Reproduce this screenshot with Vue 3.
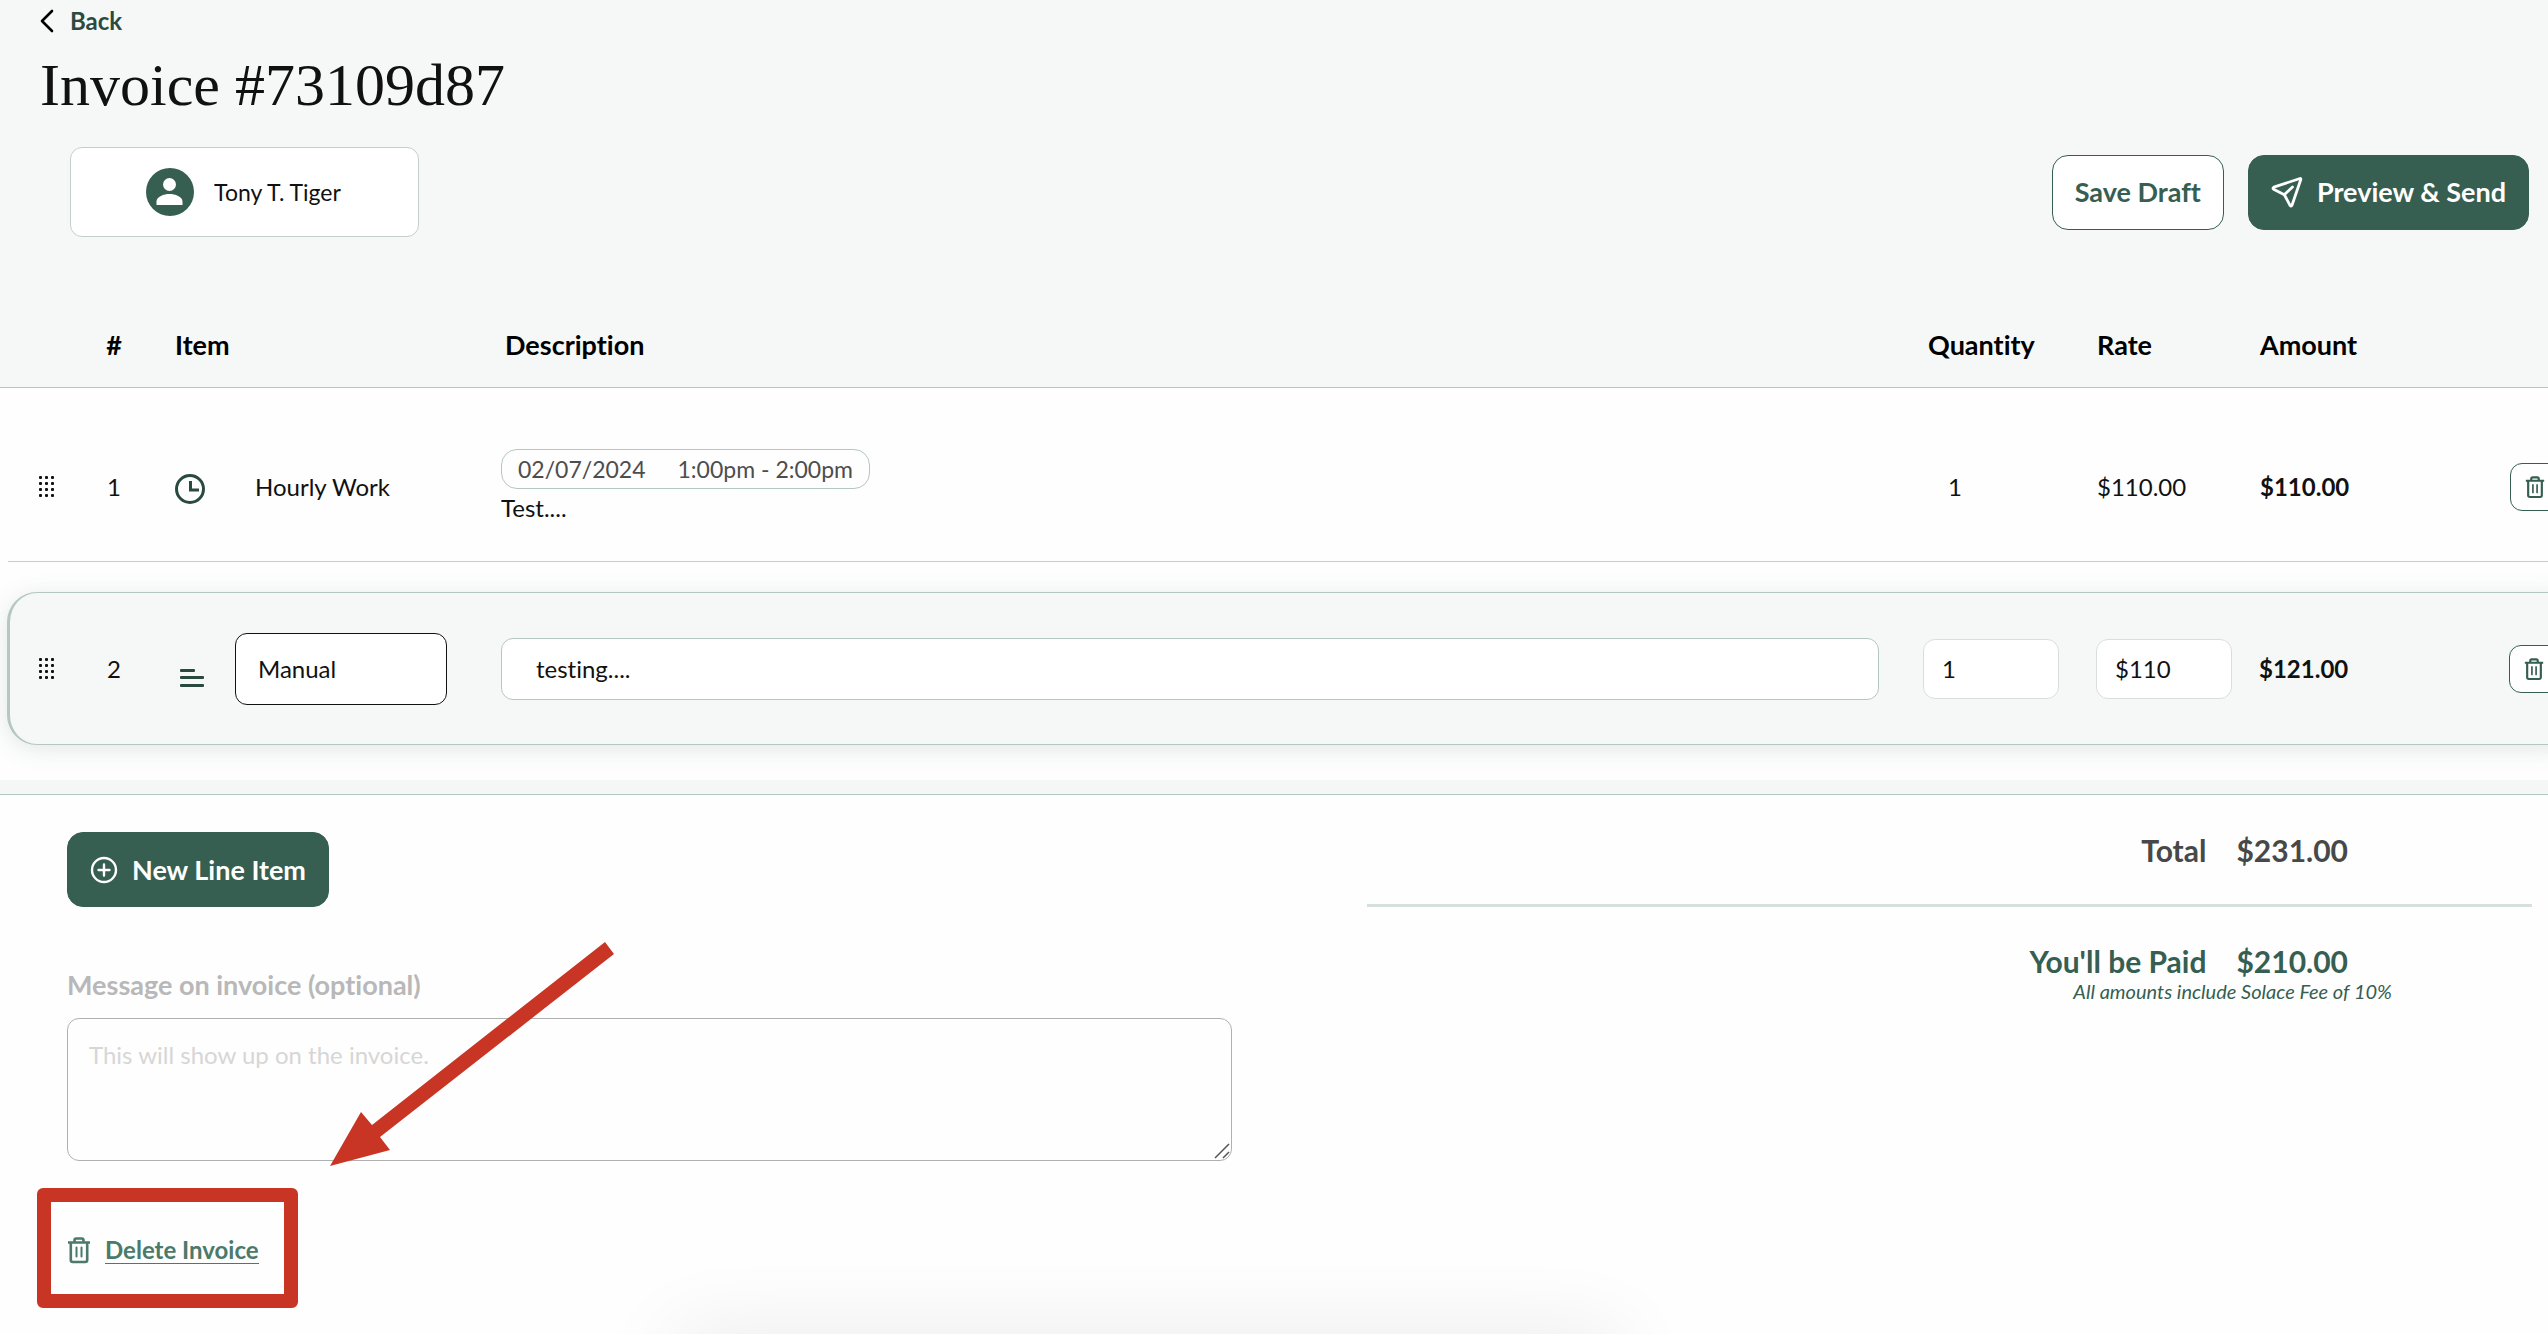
<script setup>
import { ref, computed } from 'vue'

const client = 'Tony T. Tiger'
const message = ref('')
const manual = ref({ title: 'Manual', description: 'testing....', quantity: '1', rate: '$110' })
const gripDots = computed(() => {
  const dots = []
  for (let row = 0; row < 4; row++) {
    for (let col = 0; col < 3; col++) dots.push({ x: col * 6, y: row * 6 })
  }
  return dots
})
</script>

<template>
  <div class="page">
    <svg class="symbols" aria-hidden="true">
      <symbol id="trash" viewBox="0 0 24 28">
        <g fill="none" stroke="currentColor" stroke-width="2.6" stroke-linejoin="round">
          <path d="M1 6.5h22M7.500 6V4.200Q7.500 2.500 9.200 2.500h5.600q1.700 0 1.700 1.700V6" />
          <path d="M3.800 6.500v17.500q0 2 2 2h12.400q2 0 2-2V6.500" />
          <path d="M9.500 11.500v9M14.500 11.500v9" stroke-linecap="round" stroke-width="2" />
        </g>
      </symbol>
      <symbol id="grip" viewBox="0 0 16 22">
        <rect v-for="(d, i) in gripDots" :key="i" :x="d.x" :y="d.y" width="3" height="3" rx="1" fill="currentColor" />
      </symbol>
    </svg>

    <header class="top">
      <a class="back" href="#">
        <svg width="14" height="24" viewBox="0 0 14 24" fill="none" stroke="#000" stroke-width="2.600" stroke-linecap="round" stroke-linejoin="round">
          <path d="M12 2 2 12l10 10" />
        </svg>
        Back
      </a>
      <h1>Invoice #73109d87</h1>
      <div class="bar">
        <div class="client">
          <svg width="48" height="48" viewBox="0 0 48 48">
            <circle cx="24" cy="24" r="24" fill="#365e51" />
            <circle cx="23.500" cy="16.500" r="6.500" fill="#fff" />
            <path d="M10.500 37v-3.500c0-5 7.500-7.500 13-7.500s13 2.500 13 7.500V37z" fill="#fff" />
          </svg>
          <span>{{ client }}</span>
        </div>
        <div class="actions">
          <button type="button" class="btn outline">Save Draft</button>
          <button type="button" class="btn solid send">
            <svg width="32" height="32" viewBox="0 0 32 32" fill="none" stroke="#fff" stroke-width="2.800" stroke-linecap="round" stroke-linejoin="round">
              <path d="M29 2.500 2.800 11.200q-1.600.8-.2 2l10.800 5.600 5.600 10.600q1.200 1.500 2-.2L29.800 3.500q.2-1.200-.8-1z" />
              <path d="m13.500 18.500 8-7.500" />
            </svg>
            Preview &amp; Send
          </button>
        </div>
      </div>
    </header>

    <div class="items">
      <table>
        <thead>
          <tr>
            <th aria-label="Reorder"></th>
            <th class="num">#</th>
            <th>Item</th>
            <th class="desc-head">Description</th>
            <th class="desc-head">Quantity</th>
            <th>Rate</th>
            <th>Amount</th>
            <th aria-label="Remove"></th>
          </tr>
        </thead>
        <tbody>
          <tr class="plain">
            <td class="grip"><svg width="16" height="22"><use href="#grip" /></svg></td>
            <td class="num">1</td>
            <td class="item">
              <svg class="kind" width="32" height="36" viewBox="0 0 32 36" fill="none" stroke="#2a4a40" stroke-width="3">
                <circle cx="15" cy="20" r="13.500" />
                <path d="M15.500 12v9H24" />
              </svg>
              <span class="item-name">Hourly Work</span>
            </td>
            <td class="work">
              <div class="pill"><span>02/07/2024</span><span>1:00pm - 2:00pm</span></div>
              <div class="note">Test....</div>
            </td>
            <td class="qty">1</td>
            <td>$110.00</td>
            <td class="amount">$110.00</td>
            <td>
              <button type="button" class="remove" aria-label="Remove item 1"><svg width="20" height="24"><use href="#trash" /></svg></button>
            </td>
          </tr>
          <tr class="card">
            <td class="grip"><svg width="16" height="22"><use href="#grip" /></svg></td>
            <td class="num">2</td>
            <td class="item">
              <svg class="kind" width="32" height="36" viewBox="0 0 32 36" fill="#2a4a40">
                <rect x="5" y="18" width="15" height="3" rx="1" />
                <rect x="5" y="25" width="24" height="3" rx="1" />
                <rect x="5" y="33" width="24" height="3" rx="1" />
              </svg>
              <input v-model="manual.title" class="field title-field" aria-label="Item" />
            </td>
            <td><input v-model="manual.description" class="field desc-field" aria-label="Description" /></td>
            <td><input v-model="manual.quantity" class="field small-field" aria-label="Quantity" /></td>
            <td><input v-model="manual.rate" class="field small-field" aria-label="Rate" /></td>
            <td class="amount">$121.00</td>
            <td>
              <button type="button" class="remove" aria-label="Remove item 2"><svg width="20" height="24"><use href="#trash" /></svg></button>
            </td>
          </tr>
        </tbody>
      </table>
    </div>

    <main class="bottom">
      <section class="left">
        <button type="button" class="btn solid add">
          <svg width="28" height="28" viewBox="0 0 28 28" fill="none" stroke="#fff" stroke-width="2.400" stroke-linecap="round">
            <circle cx="14" cy="14" r="12" />
            <path d="M14 8.500v11M8.500 14h11" />
          </svg>
          New Line Item
        </button>
        <label for="message">Message on invoice (optional)</label>
        <div class="message">
          <textarea id="message" v-model="message" placeholder="This will show up on the invoice."></textarea>
          <svg class="resize" width="16" height="16" viewBox="0 0 16 16" stroke="#555" stroke-width="1.500">
            <path d="M1 15 15 1M9 15l6-6" />
          </svg>
        </div>
        <div class="marked">
          <a class="delete" href="#">
            <svg width="24" height="28"><use href="#trash" /></svg>
            <span>Delete Invoice</span>
          </a>
        </div>
        <svg class="arrow" width="288" height="226" viewBox="0 0 288 226" fill="#c93524">
          <path d="M0 225 31 171l11 13L275 1l9 12L50 196l10 13z" />
        </svg>
      </section>
      <section class="totals">
        <dl class="line">
          <dt>Total</dt>
          <dd>$231.00</dd>
        </dl>
        <hr />
        <dl class="line paid">
          <dt>You'll be Paid</dt>
          <dd>$210.00</dd>
        </dl>
        <p class="fee">All amounts include Solace Fee of 10%</p>
      </section>
      <div class="glow"></div>
    </main>
  </div>
</template>

<style>
body {
  margin: 0;
  background: #fff;
}
</style>

<style scoped>
* {
  box-sizing: border-box;
}
.page {
  position: relative;
  min-height: 100vh;
  overflow: hidden;
  background: #fefefe;
  font-family: Lato, 'Open Sans', sans-serif;
  font-size: 24px;
  line-height: 32px;
  font-variant-ligatures: none;
  color: #111;
  display: flex;
  flex-direction: column;
}
.symbols {
  position: absolute;
  width: 0;
  height: 0;
}
svg {
  display: block;
  flex: none;
}
button,
input,
textarea {
  font: inherit;
  font-variant-ligatures: none;
  color: inherit;
  margin: 0;
}
.top {
  background: #f5f8f7;
  padding: 5px 19px 0 40px;
}
.back {
  display: inline-flex;
  align-items: center;
  gap: 16px;
  font-weight: 700;
  color: #2c4a40;
  text-decoration: none;
}
h1 {
  margin: 7px 0 0;
  font-family: 'Liberation Serif', serif;
  font-size: 60px;
  line-height: 76px;
  font-weight: 400;
}
.bar {
  display: flex;
  justify-content: space-between;
  align-items: center;
  margin-top: 24px;
}
.client {
  display: flex;
  align-items: center;
  justify-content: center;
  gap: 20px;
  width: 349px;
  height: 90px;
  margin-left: 30px;
  padding-right: 2px;
  background: #fff;
  border: 1px solid #c3cfcc;
  border-radius: 12px;
  font-size: 23px;
}
.actions {
  display: flex;
  gap: 24px;
}
.btn {
  display: flex;
  align-items: center;
  justify-content: center;
  height: 75px;
  padding: 0 22px;
  border: 1px solid #365e51;
  border-radius: 16px;
  font-size: 27px;
  font-weight: 700;
}
.outline {
  background: #fff;
  color: #365e51;
}
.solid {
  background: #365e51;
  color: #fff;
}
.send {
  gap: 14px;
}
.items {
  overflow: hidden;
  border-bottom: 1px solid #b5c5c1;
  padding-bottom: 14px;
  background: #f5f7f6;
}
table {
  display: block;
  width: calc(100% + 32px);
}
thead,
tbody {
  display: block;
}
tbody {
  background: #fefefe;
  padding: 0 0 35px 8px;
}
tr {
  display: grid;
  grid-template-columns: 90px 77px 326px minmax(0, 1fr) 173px 163px 250px 70px;
  align-items: center;
}
th,
td {
  padding: 0;
  text-align: left;
}
thead tr {
  height: 151px;
  padding: 66px 0 0 8px;
  background: #f5f8f7;
  border-bottom: 1px solid #b5c5c1;
  font-size: 27px;
  color: #000;
}
th.desc-head {
  padding-left: 4px;
}
th.num,
td.num {
  width: 32px;
  text-align: center;
}
.plain {
  height: 174px;
  padding-top: 24px;
  border-bottom: 1px solid #c8cccb;
}
.card {
  grid-template-columns: 88px 77px 326px minmax(0, 1fr) 173px 163px 250px 70px;
  height: 153px;
  margin: 30px 0 0 -1px;
  background: #f5f8f7;
  border: 1px solid #b5c7c2;
  border-left-width: 3px;
  border-radius: 30px;
  box-shadow: 0 4px 24px rgba(54, 94, 81, 0.14);
}
.grip {
  padding-left: 31px;
}
.card .grip {
  padding-left: 29px;
}
.item {
  display: flex;
  align-items: center;
}
.item-name {
  margin-left: 48px;
}
.title-field {
  margin-left: 28px;
}
td.work {
  padding-top: 2px;
}
.pill {
  display: flex;
  width: max-content;
  gap: 32px;
  height: 40px;
  align-items: center;
  padding: 0 16px;
  border: 1px solid #b5c7c2;
  border-radius: 16px;
  font-size: 23px;
  color: #4d4d4d;
}
.note {
  line-height: 38px;
}
.qty {
  padding-left: 24px;
}
.amount {
  font-weight: 700;
}
.remove {
  display: flex;
  align-items: center;
  width: 58px;
  height: 48px;
  padding: 0 14px;
  border: 1px solid #365e51;
  border-radius: 12px;
  background: #fff;
  color: #365e51;
}
.field {
  display: block;
  background: #fff;
  border: 1px solid #d9dedd;
  border-radius: 12px;
}
.title-field {
  width: 212px;
  height: 72px;
  padding: 0 22px;
  border-color: #111;
}
.desc-field {
  width: calc(100% - 44px);
  height: 62px;
  padding: 0 34px;
  border-color: #b5c7c2;
}
.small-field {
  width: 136px;
  height: 60px;
  padding: 0 18px;
}
.bottom {
  position: relative;
  flex: 1;
  display: grid;
  grid-template-columns: minmax(0, 1165fr) minmax(0, 1165fr);
  gap: 135px;
  padding: 37px 16px 0 67px;
  align-items: start;
}
.left {
  position: relative;
}
.add {
  gap: 14px;
}
label {
  display: block;
  margin-top: 60px;
  font-size: 27px;
  line-height: 36px;
  font-weight: 700;
  color: #b8b8b8;
}
.message {
  position: relative;
  margin-top: 15px;
}
textarea {
  display: block;
  width: 100%;
  height: 143px;
  padding: 20px 21px;
  border: 1px solid #b0b0b0;
  border-radius: 12px;
  background: #fefefe;
  resize: none;
}
textarea::placeholder {
  color: #d6d6d6;
  opacity: 1;
}
.resize {
  position: absolute;
  right: 2px;
  bottom: 2px;
}
.marked {
  display: flex;
  align-items: center;
  width: max-content;
  height: 120px;
  margin: 27px 0 0 -30px;
  padding: 4px 25px 0 16px;
  border: 14px solid #c93524;
  border-radius: 6px;
}
.delete {
  display: flex;
  align-items: center;
  gap: 14px;
  font-weight: 700;
  color: #4b7a6b;
  text-decoration: none;
}
.delete span {
  line-height: 26px;
  border-bottom: 1px solid #4b7a6b;
}
.arrow {
  position: absolute;
  left: 263px;
  top: 109px;
}
.line {
  display: flex;
  justify-content: flex-end;
  gap: 30px;
  margin: 0 184px 0 0;
  font-size: 30px;
  line-height: 36px;
  font-weight: 700;
  color: #484848;
}
.line dd {
  margin: 0;
}
hr {
  height: 3px;
  margin: 36px 0;
  border: 0;
  background: #d8e0de;
}
.line.paid {
  color: #365e51;
}
.fee {
  margin: 0 140px 0 0;
  text-align: right;
  font-size: 20px;
  line-height: 24px;
  font-style: italic;
  color: #365e51;
}
.glow {
  position: absolute;
  left: 27%;
  right: 37%;
  bottom: -40px;
  height: 24px;
  border-radius: 12px;
  box-shadow: 0 0 80px 20px rgba(0, 0, 0, 0.08);
}
</style>
